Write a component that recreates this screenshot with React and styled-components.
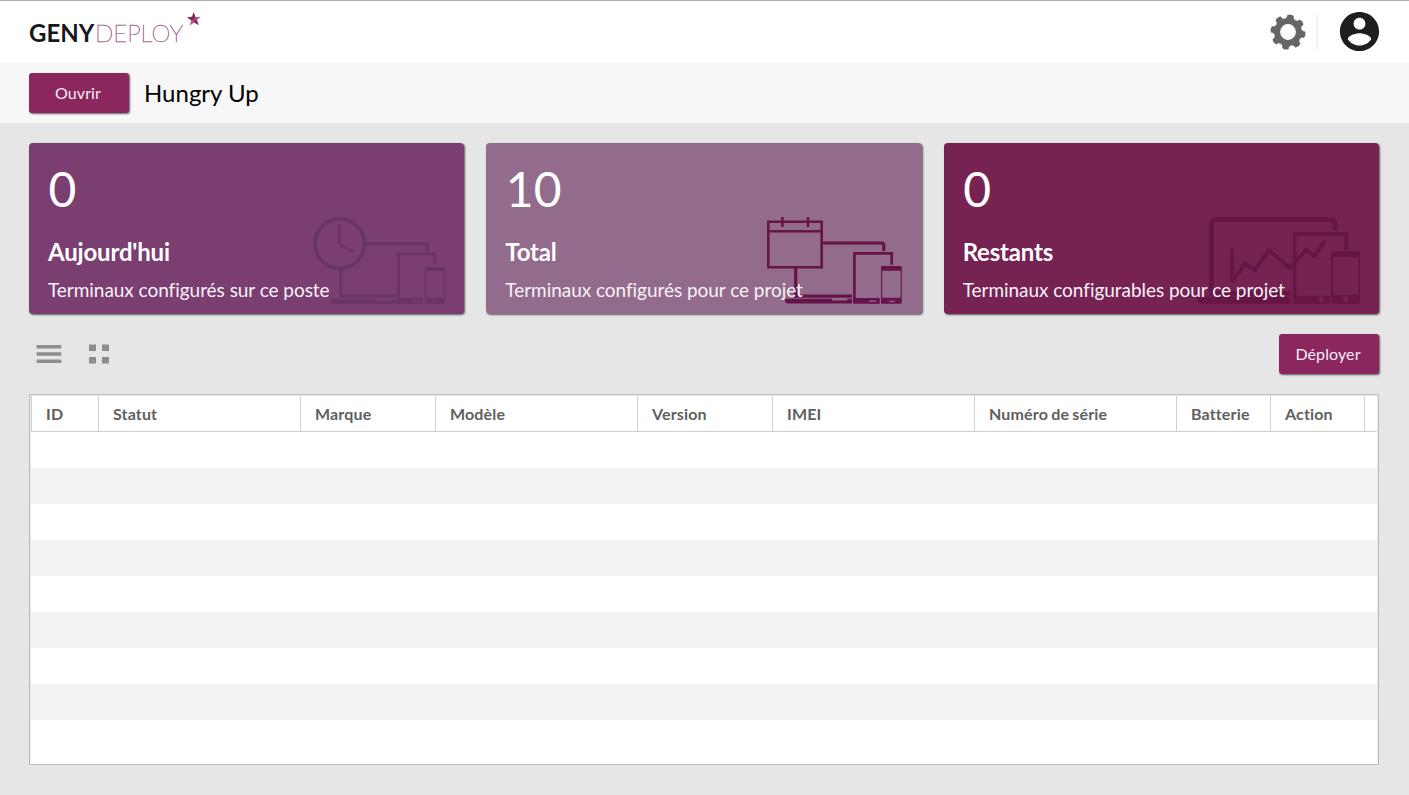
import React from "react";
import styled, { createGlobalStyle } from "styled-components";

const Global = createGlobalStyle`
  * { box-sizing: border-box; }
  body { margin: 0; background: #e6e6e6; font-family: Lato, "Open Sans", sans-serif; overflow: hidden; }
`;

const Page = styled.div`
  height: 795px;
  display: flex;
  flex-direction: column;
  border-top: 1px solid #adadad;
  background: #e6e6e6;
`;

const Header = styled.header`
  height: 62px;
  flex: none;
  display: flex;
  align-items: center;
  justify-content: space-between;
  padding: 0 26px 0 29px;
  background: #fff;
`;

const Logo = styled.div`
  display: flex;
  align-items: center;
  height: 100%;
  padding-top: 2px;
  font-size: 24px;
  line-height: 30px;
`;

const LogoStrong = styled.span`
  width: 66px;
  font-weight: 700;
  color: #15191d;
`;

const LogoThin = styled.span`
  width: 90px;
  font-weight: 100;
  color: #9c4a7c;
  -webkit-text-stroke: 0.4px #9c4a7c;
`;

const Star = styled.svg`
  width: 14px;
  height: 14px;
  margin: -28px 0 0 1.5px;
`;

const HeaderActions = styled.div`
  display: flex;
  align-items: center;
  padding-bottom: 1px;
`;

const Divider = styled.span`
  width: 2px;
  height: 34px;
  margin: 0 18px 0 10px;
  background: #f2f2f2;
`;

const SubBar = styled.div`
  height: 60px;
  flex: none;
  display: flex;
  align-items: center;
  gap: 15px;
  padding: 0 29px;
  background: #f7f7f7;
`;

const Button = styled.button`
  width: 100px;
  height: 40px;
  padding: 0 2px 0 0;
  border: 0;
  border-radius: 3px;
  background: #8b265f;
  box-shadow: 1px 1px 2px rgba(0, 0, 0, 0.6);
  color: #f8eef4;
  font: 400 16px/40px Lato, sans-serif;
  letter-spacing: 0.1px;
`;

const ProjectName = styled.h1`
  margin: 0;
  font-size: 24px;
  font-weight: 400;
  line-height: 30px;
  color: #000;
`;

const Main = styled.main`
  flex: 1;
  display: flex;
  flex-direction: column;
  padding: 20px 30px 30px 29px;
`;

const Cards = styled.section`
  display: grid;
  grid-template-columns: repeat(3, 1fr);
  gap: 22px;
`;

const Card = styled.article`
  position: relative;
  height: 171px;
  padding: 17px 19px 0;
  border-radius: 4px;
  background: ${(p) => p.$bg};
  box-shadow: 1px 1px 2px rgba(0, 0, 0, 0.6);
  color: #fff;
`;

const CardArt = styled.svg`
  position: absolute;
  right: ${(p) => p.$right}px;
  bottom: 8px;
  height: 92px;
  fill: none;
  stroke: ${(p) => p.$ink};
`;

const Count = styled.div`
  position: relative;
  padding-left: 0.5px;
  font-size: 48px;
  line-height: 58px;
`;

const CardTitle = styled.div`
  position: relative;
  margin-top: 19px;
  font-size: 24px;
  font-weight: 700;
  line-height: 29px;
  letter-spacing: -0.18px;
`;

const CardText = styled.div`
  position: relative;
  margin-top: 12px;
  font-size: 19px;
  line-height: 24px;
  letter-spacing: -0.04px;
  font-variant-ligatures: common-ligatures;
  white-space: nowrap;
  color: #f8f2f6;
`;

const Toolbar = styled.div`
  display: flex;
  align-items: center;
  justify-content: space-between;
  height: 40px;
  margin: 20px 0;
`;

const ViewIcons = styled.div`
  display: flex;
  align-items: center;
  gap: 27px;
  padding-left: 7px;
`;

const Table = styled.div`
  width: 1350px;
  height: 371px;
  padding: 1px 1px 0;
  border: 1px solid #bdbdbd;
  background: #e9e9e9;
  overflow: hidden;
`;

const TableBody = styled.div`
  height: 100%;
  background: #fff;
`;

const HeadRow = styled.div`
  display: flex;
  height: 36px;
  border-left: 1px solid #d0d0d0;
  border-bottom: 1px solid #d0d0d0;
`;

const HeadCell = styled.div`
  width: ${(p) => p.$w}px;
  flex: none;
  padding-left: 14px;
  border-right: 1px solid #d0d0d0;
  font-size: 16px;
  font-weight: 700;
  line-height: 35px;
  letter-spacing: 0.15px;
  word-spacing: -0.8px;
  white-space: nowrap;
  color: #606060;
`;

const Row = styled.div`
  height: 36px;
  background: ${(p) => (p.$odd ? "#f2f2f2" : "#fff")};
`;

const columns = [
  ["ID", 67],
  ["Statut", 202],
  ["Marque", 135],
  ["Modèle", 202],
  ["Version", 135],
  ["IMEI", 202],
  ["Numéro de série", 202],
  ["Batterie", 94],
  ["Action", 94],
];

const gearPath = (() => {
  const pts = [];
  for (let i = 0; i < 8; i++) {
    const base = ((i * 45 + 9) * Math.PI) / 180;
    const at = (d, r) => {
      const a = base + (d * Math.PI) / 180;
      return `${(18 + r * Math.sin(a)).toFixed(2)} ${(18 - r * Math.cos(a)).toFixed(2)}`;
    };
    pts.push(`${i ? "L" : "M"}${at(-11, 17)}Q${at(0, 18.6)} ${at(11, 17)}L${at(13, 15)}Q${at(22.5, 12.6)} ${at(32, 15)}`);
  }
  return `${pts.join("")}ZM18 10.1a7.9 7.9 0 1 0 0 15.8a7.9 7.9 0 1 0 0-15.8Z`;
})();

function ClockArt() {
  const ink = "#693567";
  return (
    <CardArt $ink={ink} $right={14} width="140" viewBox="0 0 140 92">
      <circle cx="29.7" cy="29.7" r="24.7" strokeWidth="3.6" />
      <path d="M29.3 10.3V30.3L43.7 38" strokeWidth="2.4" />
      <path d="M56 29.7H115.5Q117.2 29.7 117.2 31.5V37.7M30.7 55V82.2H86.3" strokeWidth="3.2" />
      <path d="M20.7 85H66V86.7H82V85H86.3V89.7H23.5Q20.7 89.5 20.7 85Z" fill={ink} stroke="none" />
      <path d="M88.4 89V40H125V51" strokeWidth="2.7" />
      <path fillRule="evenodd" d="M87 84H113V89.7H87ZM102.7 86.7H110.3V88H102.7Z" fill={ink} stroke="none" />
      <path fillRule="evenodd" d="M116 53H134Q135 53 135 54.3V88.4Q135 89.7 134 89.7H116Q114.7 89.7 114.7 88.4V54.3Q114.7 53 116 53ZM115.9 57V84H134V57ZM122.3 86.7V87.9H128V86.7Z" fill={ink} stroke="none" />
    </CardArt>
  );
}

function CalendarArt() {
  const ink = "#661448";
  return (
    <CardArt $ink={ink} $right={18} width="140" viewBox="0 0 140 92">
      <path d="M4.3 7.8H57.7V53.3H4.3ZM4.3 17.3H57.7M18.4 3V13M44 3V13" strokeWidth="2.6" />
      <path d="M59 29H118Q119.8 29 119.8 31V37M31.7 54V82.2H88" strokeWidth="3.2" />
      <path d="M21 84.7H68V86.4H83.3V84.7H88V89.5H23.5Q21 89.3 21 84.7Z" fill={ink} stroke="none" />
      <path d="M90.4 89V39.3H127.7V50.7" strokeWidth="2.7" />
      <path fillRule="evenodd" d="M89 84H115.7V89.7H89ZM105 86.4H112.3V87.7H105Z" fill={ink} stroke="none" />
      <path fillRule="evenodd" d="M118.3 52H136.5Q137.8 52 137.8 53.3V88.4Q137.8 89.7 136.5 89.7H118.3Q117 89.7 117 88.4V53.3Q117 52 118.3 52ZM118.2 56.7V83.7H136.7V56.7ZM125.3 86.8V88H130.7V86.8Z" fill={ink} stroke="none" />
    </CardArt>
  );
}

function ChartArt() {
  const ink = "#661545";
  return (
    <CardArt $ink={ink} $right={15} width="168" viewBox="0 0 168 92">
      <path d="M15.5 81.7V9Q15.5 5.5 19 5.5H135.5Q138.8 5.5 138.8 9V16M15.5 79.4H94.7" strokeWidth="4.8" />
      <path d="M1 82.7H94.7V89.7H5Q1 89.3 1 82.7Z" fill={ink} stroke="none" />
      <path d="M98.6 88V20H150.3V36" strokeWidth="3.8" />
      <path fillRule="evenodd" d="M96.7 81.7H134V89.7H98.5Q96.7 89.7 96.7 88ZM125.3 82.6a2.7 2.7 0 1 0 0 5.4a2.7 2.7 0 1 0 0-5.4Z" fill={ink} stroke="none" />
      <path fillRule="evenodd" d="M137 37H162Q164 37 164 39V87.7Q164 89.7 162 89.7H137Q135 89.7 135 87.7V39Q135 37 137 37ZM137 43V81H162.6V43ZM149.4 82.6a2.7 2.7 0 1 0 0 5.4a2.7 2.7 0 1 0 0-5.4Z" fill={ink} stroke="none" />
      <path d="M36 36V67.7L48.7 50L59 56L72.7 36L93.7 54L110 36L118 42L128.3 28" strokeWidth="4" strokeLinecap="round" strokeLinejoin="miter" strokeMiterlimit="2" />
    </CardArt>
  );
}

const cards = [
  { count: "0", title: "Aujourd'hui", text: "Terminaux configurés sur ce poste", bg: "#7a3e70", Art: ClockArt },
  { count: "10", title: "Total", text: "Terminaux configurés pour ce projet", bg: "#936b8c", Art: CalendarArt },
  { count: "0", title: "Restants", text: "Terminaux configurables pour ce projet", bg: "#762252", Art: ChartArt },
];

export default function App() {
  return (
    <Page>
      <Global />
      <Header>
        <Logo>
          <LogoStrong>GENY</LogoStrong>
          <LogoThin>DEPLOY</LogoThin>
          <Star viewBox="0 0 14 14">
            <path d="M6.6 0.3L8.4 4.9L13.7 4.8L9.8 8L11.8 13L7.3 10.4L3 13.2L4.3 8.2L0.2 5.4L5.2 4.8Z" fill="#a9588b" />
            <path d="M6.6 0.3L8.4 4.9L7 7.4L4.3 8.2L0.2 5.4L5.2 4.8ZM7 7.4L9.8 8L11.8 13L7.3 10.4Z" fill="#86245d" />
          </Star>
        </Logo>
        <HeaderActions>
          <svg width="36" height="36" viewBox="0 0 36 36">
            <path d={gearPath} fill="#666" fillRule="evenodd" />
          </svg>
          <Divider />
          <svg width="47" height="47" viewBox="0 0 24 24" fill="#1e1e1e">
            <path d="M12 2C6.48 2 2 6.48 2 12s4.48 10 10 10 10-4.48 10-10S17.52 2 12 2zm0 3c1.66 0 3 1.34 3 3s-1.34 3-3 3-3-1.34-3-3 1.34-3 3-3zm0 14.2c-2.5 0-4.71-1.28-6-3.22.03-1.99 4-3.08 6-3.08 1.99 0 5.97 1.09 6 3.08-1.29 1.94-3.5 3.22-6 3.22z" />
          </svg>
        </HeaderActions>
      </Header>
      <SubBar>
        <Button>Ouvrir</Button>
        <ProjectName>Hungry Up</ProjectName>
      </SubBar>
      <Main>
        <Cards>
          {cards.map(({ count, title, text, bg, Art }) => (
            <Card key={title} $bg={bg}>
              <Art />
              <Count>{count}</Count>
              <CardTitle>{title}</CardTitle>
              <CardText>{text}</CardText>
            </Card>
          ))}
        </Cards>
        <Toolbar>
          <ViewIcons>
            <svg width="26" height="20" viewBox="0 0 26 20" fill="#8d8d8d">
              <path d="M0.6 1H25.3V4.5H0.6ZM0.6 8.2H25.3V11.7H0.6ZM0.6 15.4H25.3V18.9H0.6Z" />
            </svg>
            <svg width="20" height="20" viewBox="0 0 20 20" fill="#8d8d8d">
              <path d="M0 0.5H7V7H0ZM13 0.5H20V7H13ZM0 13H7V19.5H0ZM13 13H20V19.5H13Z" />
            </svg>
          </ViewIcons>
          <Button>Déployer</Button>
        </Toolbar>
        <Table>
          <TableBody>
            <HeadRow>
              {columns.map(([label, w]) => (
                <HeadCell key={label} $w={w}>{label}</HeadCell>
              ))}
            </HeadRow>
            {Array.from({ length: 9 }, (_, i) => (
              <Row key={i} $odd={i % 2 === 1} />
            ))}
          </TableBody>
        </Table>
      </Main>
    </Page>
  );
}
